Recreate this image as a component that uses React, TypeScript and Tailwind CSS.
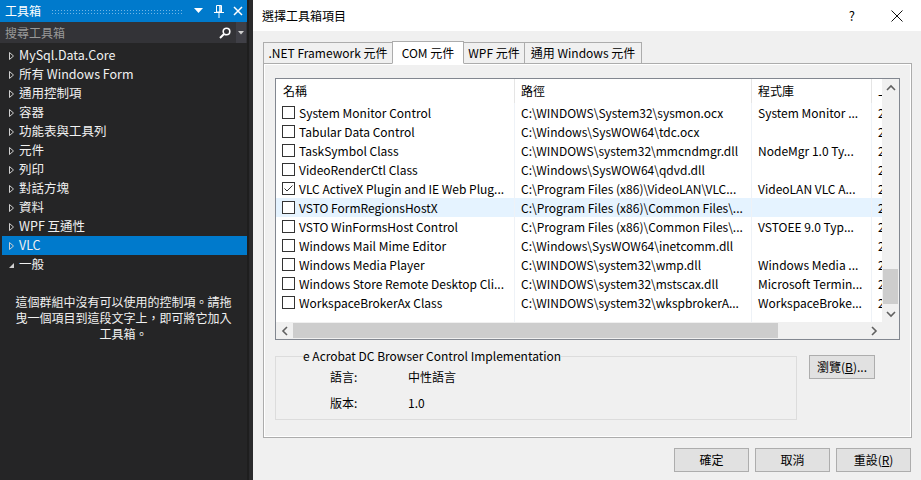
import React from 'react';

const ui = "font-['Noto_Sans_CJK_TC',sans-serif]";

const toolboxGroups = [
  'MySql.Data.Core',
  '所有 Windows Form',
  '通用控制項',
  '容器',
  '功能表與工具列',
  '元件',
  '列印',
  '對話方塊',
  '資料',
  'WPF 互通性',
  'VLC',
];

interface ComItem {
  name: string;
  path: string;
  lib: string;
  checked?: boolean;
  hover?: boolean;
}

const comItems: ComItem[] = [
  { name: 'System Monitor Control', path: 'C:\\WINDOWS\\System32\\sysmon.ocx', lib: 'System Monitor ...' },
  { name: 'Tabular Data Control', path: 'C:\\Windows\\SysWOW64\\tdc.ocx', lib: '' },
  { name: 'TaskSymbol Class', path: 'C:\\WINDOWS\\system32\\mmcndmgr.dll', lib: 'NodeMgr 1.0 Ty...' },
  { name: 'VideoRenderCtl Class', path: 'C:\\Windows\\SysWOW64\\qdvd.dll', lib: '' },
  { name: 'VLC ActiveX Plugin and IE Web Plug...', path: 'C:\\Program Files (x86)\\VideoLAN\\VLC...', lib: 'VideoLAN VLC A...', checked: true },
  { name: 'VSTO FormRegionsHostX', path: 'C:\\Program Files (x86)\\Common Files\\...', lib: '', hover: true },
  { name: 'VSTO WinFormsHost Control', path: 'C:\\Program Files (x86)\\Common Files\\...', lib: 'VSTOEE 9.0 Typ...' },
  { name: 'Windows Mail Mime Editor', path: 'C:\\Windows\\SysWOW64\\inetcomm.dll', lib: '' },
  { name: 'Windows Media Player', path: 'C:\\WINDOWS\\system32\\wmp.dll', lib: 'Windows Media ...' },
  { name: 'Windows Store Remote Desktop Cli...', path: 'C:\\WINDOWS\\system32\\mstscax.dll', lib: 'Microsoft Termin...' },
  { name: 'WorkspaceBrokerAx Class', path: 'C:\\WINDOWS\\system32\\wkspbrokerA...', lib: 'WorkspaceBroke...' },
];

const tabs = [
  { label: '.NET Framework 元件', w: 'w-[130px]' },
  { label: 'COM 元件', w: 'w-[72px]', active: true },
  { label: 'WPF 元件', w: 'w-[62px]' },
  { label: '通用 Windows 元件', w: 'w-[118px]' },
];

const Collapsed = () => (
  <svg width="7" height="10" viewBox="0 0 7 10">
    <path d="M1.5 1.5 L5.5 5 L1.5 8.5 Z" fill="none" stroke="#d0d0d0" strokeWidth="1" />
  </svg>
);

const Expanded = () => (
  <svg width="7" height="10" viewBox="0 0 7 10">
    <path d="M6 3 L6 8 L1 8 Z" fill="#d0d0d0" />
  </svg>
);

const Checkbox = ({ checked }: { checked?: boolean }) => (
  <div className="w-[13px] h-[13px] border border-[#333333] bg-white flex items-center justify-center shrink-0">
    {checked && (
      <svg width="11" height="11" viewBox="0 0 11 11">
        <path d="M1.5 5.5 L4 8 L9.5 2.5" fill="none" stroke="#333333" strokeWidth="1" />
      </svg>
    )}
  </div>
);

const Chevron = ({ dir }: { dir: 'up' | 'down' | 'left' | 'right' }) => {
  const d = {
    up: 'M1 6 L5 2 L9 6',
    down: 'M1 2 L5 6 L9 2',
    left: 'M6 1 L2 5 L6 9',
    right: 'M2 1 L6 5 L2 9',
  }[dir];
  const vertical = dir === 'up' || dir === 'down';
  return (
    <svg width={vertical ? 10 : 8} height={vertical ? 8 : 10} viewBox={vertical ? '0 0 10 8' : '0 0 8 10'}>
      <path d={d} fill="none" stroke="#606060" strokeWidth="1.6" />
    </svg>
  );
};

function Toolbox() {
  return (
    <div className={`w-[247px] h-full bg-[#252526] text-[#f1f1f1] flex flex-col ${ui}`}>
      {/* title */}
      <div className="h-[22px] bg-[#007acc] flex items-center pl-[5px] pr-[4px]">
        <span className="text-[12px] text-white">工具箱</span>
        <div className="flex-1 h-[5px] mx-[10px] bg-[radial-gradient(circle,#6fb5e6_0.7px,transparent_0.9px)] bg-[length:3px_3px]" />
        <svg width="9" height="6" viewBox="0 0 9 6" className="mr-[10px]">
          <path d="M0 0 H9 L4.5 5 Z" fill="white" />
        </svg>
        <svg width="12" height="14" viewBox="0 0 12 14" className="mr-[8px]">
          <path d="M3.5 1.5 H8.5 V8 H3.5 Z" fill="none" stroke="white" />
          <path d="M7 1.5 V8" stroke="white" strokeWidth="1.5" />
          <path d="M1 8.5 H11" stroke="white" />
          <path d="M6 9 V14" stroke="white" />
        </svg>
        <svg width="10" height="10" viewBox="0 0 10 10">
          <path d="M1 1 L9 9 M9 1 L1 9" stroke="white" strokeWidth="1.5" />
        </svg>
      </div>
      {/* search */}
      <div className="h-[21px] bg-[#333337] flex items-center">
        <span className="flex-1 pl-[5px] text-[12px] text-[#999999]">搜尋工具箱</span>
        <svg width="12" height="12" viewBox="0 0 12 12" className="mr-[5px]">
          <circle cx="7.5" cy="4.5" r="3.3" fill="none" stroke="white" strokeWidth="1.6" />
          <path d="M5 7 L1 11" stroke="white" strokeWidth="2" />
        </svg>
        <div className="w-[10px] h-full bg-[#3f3f46] flex items-center justify-center mr-[1px]">
          <svg width="6" height="4" viewBox="0 0 6 4">
            <path d="M0 0 H6 L3 3.5 Z" fill="#d0d0d0" />
          </svg>
        </div>
      </div>
      {/* tree */}
      <div className="pt-[2px] mt-px">
        {toolboxGroups.map(g => (
          <div
            key={g}
            className={`h-[19px] flex items-center pl-[6px] ml-[2px] ${g === 'VLC' ? 'bg-[#007acc]' : ''}`}
          >
            <Collapsed />
            <span className="ml-[4px] text-[12.5px]">{g}</span>
          </div>
        ))}
        <div className="h-[19px] flex items-center pl-[6px] ml-[2px]">
          <Expanded />
          <span className="ml-[4px] text-[12.5px]">一般</span>
        </div>
      </div>
      <p className="mt-[20px] text-[12px] leading-[16px] text-center px-[6px]">
        這個群組中沒有可以使用的控制項。請拖
        <br />
        曳一個項目到這段文字上，即可將它加入
        <br />
        工具箱。
      </p>
    </div>
  );
}

function ComList() {
  return (
    <div className="w-[625px] h-[262px] border border-[#828790] bg-white flex flex-col">
      <div className="flex flex-1 min-h-0">
        <div className="flex-1 overflow-hidden">
          <div className="h-[24px] flex text-[12px]">
            <div className="w-[239px] shrink-0 border-r border-[#e5e5e5] pl-[7px] flex items-center">名稱</div>
            <div className="w-[237px] shrink-0 border-r border-[#e5e5e5] pl-[6px] flex items-center">路徑</div>
            <div className="w-[120px] shrink-0 border-r border-[#e5e5e5] pl-[6px] flex items-center">程式庫</div>
            <div className="flex-1 pl-[6px] flex items-center overflow-hidden whitespace-nowrap">上次修改</div>
          </div>
          {comItems.map(item => (
            <div
              key={item.name}
              className={`h-[19px] flex text-[12px] whitespace-nowrap ${item.hover ? 'bg-[#e5f3ff]' : ''}`}
            >
              <div className="w-[239px] shrink-0 border-r border-[#eef2f7] pl-[6px] flex items-center overflow-hidden">
                <Checkbox checked={item.checked} />
                <span className="ml-[4px]">{item.name}</span>
              </div>
              <div className="w-[237px] shrink-0 border-r border-[#eef2f7] pl-[6px] flex items-center overflow-hidden">
                {item.path}
              </div>
              <div className="w-[120px] shrink-0 border-r border-[#eef2f7] pl-[6px] flex items-center overflow-hidden">
                {item.lib}
              </div>
              <div className="flex-1 pl-[6px] flex items-center overflow-hidden">2019/3/4</div>
            </div>
          ))}
          <div className="h-full flex">
            <div className="w-[239px] shrink-0 border-r border-[#eef2f7]" />
            <div className="w-[237px] shrink-0 border-r border-[#eef2f7]" />
            <div className="w-[120px] shrink-0 border-r border-[#eef2f7]" />
          </div>
        </div>
        {/* vertical scrollbar */}
        <div className="w-[17px] bg-[#f0f0f0] flex flex-col">
          <div className="h-[17px] flex items-center justify-center"><Chevron dir="up" /></div>
          <div className="h-[173px]" />
          <div className="h-[35px] mx-[1px] bg-[#cdcdcd]" />
          <div className="flex-1" />
          <div className="h-[17px] flex items-center justify-center"><Chevron dir="down" /></div>
        </div>
      </div>
      {/* horizontal scrollbar */}
      <div className="h-[17px] flex">
        <div className="flex-1 bg-[#f0f0f0] flex items-center">
          <div className="w-[17px] flex items-center justify-center"><Chevron dir="left" /></div>
          <div className="w-[485px] h-[15px] bg-[#cdcdcd]" />
          <div className="flex-1" />
          <div className="w-[17px] flex items-center justify-center"><Chevron dir="right" /></div>
        </div>
        <div className="w-[17px] bg-[#f0f0f0]" />
      </div>
    </div>
  );
}

function Button({ children, w }: { children: React.ReactNode; w: string }) {
  return (
    <div className={`${w} h-[24px] bg-[#e1e1e1] border border-[#adadad] flex items-center justify-center text-[12px]`}>
      {children}
    </div>
  );
}

function ChooseItemsDialog() {
  return (
    <div className={`flex-1 h-full bg-[#f0f0f0] flex flex-col text-black ${ui}`}>
      <div className="h-[31px] bg-white flex items-center pl-[9px] shrink-0">
        <span className="flex-1 text-[12px]">選擇工具箱項目</span>
        <span className="text-[13px] mr-[36px]">?</span>
        <svg width="12" height="12" viewBox="0 0 12 12" className="mr-[18px]">
          <path d="M0.5 0.5 L11.5 11.5 M11.5 0.5 L0.5 11.5" stroke="#111" strokeWidth="1" />
        </svg>
      </div>

      <div className="pl-[10px] pr-[9px] pt-[9px]">
        <div className="flex items-end h-[23px]">
          {tabs.map(t => (
            <div
              key={t.label}
              className={`${t.w} flex items-center justify-center text-[12px] border border-[#acacac] -mr-px ${
                t.active
                  ? 'h-[23px] bg-white border-b-white relative z-10 -mb-px'
                  : 'h-[21px] bg-[#f0f0f0] border-b-0'
              }`}
            >
              {t.label}
            </div>
          ))}
        </div>
        <div className="h-[375px] border border-[#acacac] shadow-[inset_0_0_0_1px_#ffffff] pl-[11px] pt-[14px]">
          <ComList />
          <div className="flex mt-[8px]">
            <fieldset className="w-[522px] h-[72px] border border-[#dcdcdc]">
              <legend className="ml-[27px] text-[12px] leading-[16px]">e Acrobat DC Browser Control Implementation</legend>
              <div className="flex text-[12px] mt-[4px] h-[18px] items-center pl-[54px]">
                <span className="w-[78px]">語言:</span>
                <span>中性語言</span>
              </div>
              <div className="flex text-[12px] mt-[8px] h-[18px] items-center pl-[54px]">
                <span className="w-[78px]">版本:</span>
                <span>1.0</span>
              </div>
            </fieldset>
            <div className="ml-[12px] mt-[7px]">
              <Button w="w-[66px]">
                瀏覽(<span className="underline">B</span>)...
              </Button>
            </div>
          </div>
        </div>
        <div className="flex justify-end gap-[6px] mt-[10px] pr-[1px]">
          <Button w="w-[75px]">確定</Button>
          <Button w="w-[75px]">取消</Button>
          <Button w="w-[75px]">
            重設(<span className="underline">R</span>)
          </Button>
        </div>
      </div>
    </div>
  );
}

export default function App() {
  return (
    <div className="w-[921px] h-[480px] flex overflow-hidden bg-[#252526]">
      <Toolbox />
      <div className="w-[6px] h-full bg-[#2a2a2c] border-l-[2px] border-[#1e1e1e]" />
      <ChooseItemsDialog />
    </div>
  );
}
